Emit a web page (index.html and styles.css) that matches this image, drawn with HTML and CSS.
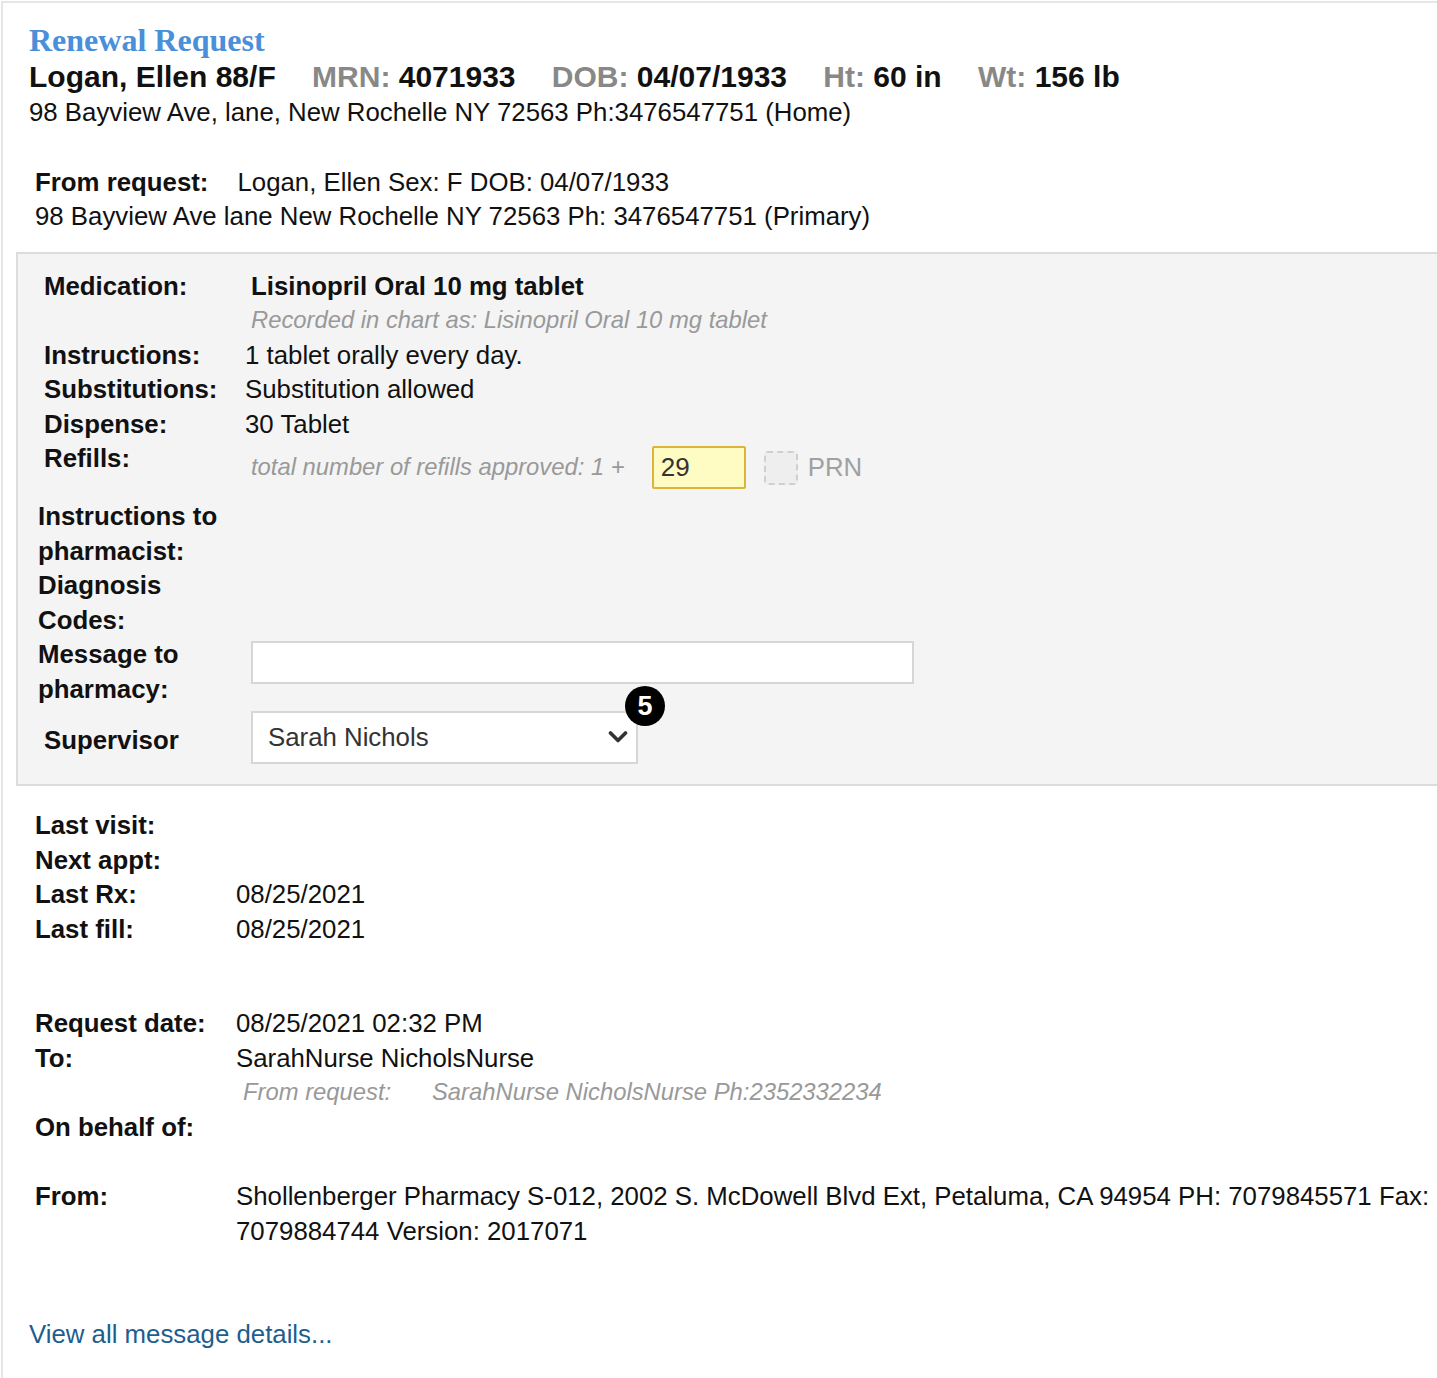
FILE: index.html
```html
<!DOCTYPE html>
<html>
<head>
<meta charset="utf-8">
<link rel="stylesheet" href="styles.css">
</head>
<body>
<div class="frame">
  <div class="header">
    <div class="title">Renewal Request</div>
    <div class="patient">
      <span class="name">Logan, Ellen 88/F</span>
      <span class="fact"><span class="k">MRN:</span> 4071933</span>
      <span class="fact"><span class="k">DOB:</span> 04/07/1933</span>
      <span class="fact"><span class="k">Ht:</span> 60 in</span>
      <span class="fact"><span class="k">Wt:</span> 156 lb</span>
    </div>
    <div class="addr">98 Bayview Ave, lane, New Rochelle NY 72563 Ph:3476547751 (Home)</div>
  </div>

  <div class="fromreq">
    <div><b class="fr-label">From request:</b>Logan, Ellen Sex: F DOB: 04/07/1933</div>
    <div>98 Bayview Ave lane New Rochelle NY 72563 Ph: 3476547751 (Primary)</div>
  </div>

  <div class="panel">
    <div class="row">
      <div class="lbl">Medication:</div>
      <div class="val">
        <div class="med">Lisinopril Oral 10 mg tablet</div>
        <div class="note">Recorded in chart as: Lisinopril Oral 10 mg tablet</div>
      </div>
    </div>
    <div class="row">
      <div class="lbl">Instructions:</div>
      <div class="val shift">1 tablet orally every day.</div>
    </div>
    <div class="row">
      <div class="lbl">Substitutions:</div>
      <div class="val shift">Substitution allowed</div>
    </div>
    <div class="row">
      <div class="lbl">Dispense:</div>
      <div class="val shift">30 Tablet</div>
    </div>
    <div class="row">
      <div class="lbl">Refills:</div>
      <div class="val refills">
        <span class="note">total number of refills approved: 1 +</span>
        <span class="refill-input">29</span>
        <span class="check"></span>
        <span class="prn">PRN</span>
      </div>
    </div>
    <div class="row">
      <div class="lbl wide">Instructions to<br>pharmacist:</div>
      <div class="val"></div>
    </div>
    <div class="row">
      <div class="lbl wide">Diagnosis<br>Codes:</div>
      <div class="val"></div>
    </div>
    <div class="row">
      <div class="lbl wide">Message to<br>pharmacy:</div>
      <div class="val"><div class="textbox"></div></div>
    </div>
    <div class="row super">
      <div class="lbl">Supervisor</div>
      <div class="val">
        <div class="select">
          <span>Sarah Nichols</span>
          <svg class="chev" width="20" height="14" viewBox="0 0 20 14"><path d="M2.5 3 L10 10.5 L17.5 3" fill="none" stroke="#333" stroke-width="3.6" stroke-linecap="round" stroke-linejoin="round"/></svg>
          <span class="badge">5</span>
        </div>
      </div>
    </div>
  </div>

  <div class="info">
    <div class="row2"><b>Last visit:</b><span></span></div>
    <div class="row2"><b>Next appt:</b><span></span></div>
    <div class="row2"><b>Last Rx:</b><span>08/25/2021</span></div>
    <div class="row2"><b>Last fill:</b><span>08/25/2021</span></div>
  </div>

  <div class="info req">
    <div class="row2"><b>Request date:</b><span>08/25/2021 02:32 PM</span></div>
    <div class="row2"><b>To:</b><span>SarahNurse NicholsNurse</span></div>
    <div class="row2"><span></span><span class="note tonote"><span class="tn-k">From request:</span>SarahNurse NicholsNurse Ph:2352332234</span></div>
    <div class="row2"><b>On behalf of:</b><span></span></div>
    <div class="row2 from"><b>From:</b><span>Shollenberger Pharmacy S-012, 2002 S. McDowell Blvd Ext, Petaluma, CA 94954 PH: 7079845571 Fax: 7079884744 Version: 2017071</span></div>
  </div>

  <a class="more" href="#">View all message details...</a>
</div>
</body>
</html>
```

FILE: styles.css
```css
html, body {
  margin: 0;
  padding: 0;
  background: #fff;
  overflow-x: hidden;
}
body {
  font-family: "Liberation Sans", Arial, sans-serif;
  font-size: 25.8px;
  line-height: 34.5px;
  color: #111;
}
.frame {
  margin-top: 1px;
  margin-left: 1px;
  border-top: 2px solid #e6e6e6;
  border-left: 2px solid #e6e6e6;
  min-height: 1370px;
  padding-top: 19px;
}
.header {
  padding-left: 26px;
}
.title {
  font-family: "Liberation Serif", "Times New Roman", serif;
  font-weight: bold;
  font-size: 32px;
  line-height: 37px;
  color: #4a8fda;
}
.patient {
  font-weight: bold;
  font-size: 30px;
  line-height: 36px;
  white-space: nowrap;
}
.patient .fact {
  margin-left: 28px;
}
.patient .k {
  color: #888;
}
.fromreq {
  margin-top: 35px;
  padding-left: 32px;
}
.fr-label {
  margin-right: 29px;
}
.panel {
  margin-top: 18px;
  margin-left: 13px;
  margin-right: -20px;
  background: #f4f4f4;
  border: 2px solid #dcdcdc;
  padding: 15px 0 20px 26px;
}
.row {
  display: grid;
  grid-template-columns: 207px 1fr;
}
.lbl {
  font-weight: bold;
}
.lbl.wide {
  margin-left: -6px;
}
.med {
  font-weight: bold;
}
.note {
  font-style: italic;
  font-size: 23.8px;
  color: #999;
}
.val.shift {
  margin-left: -6px;
}
.refills {
  display: flex;
  align-items: center;
  height: 43px;
  margin-top: 5px;
  margin-bottom: 10px;
}
.refill-input {
  box-sizing: border-box;
  width: 94px;
  height: 43px;
  margin-left: 27px;
  background: #fefcc3;
  border: 2px solid #dcb43c;
  border-radius: 2px;
  padding-left: 7px;
  font-size: 26px;
  line-height: 39px;
  color: #333;
}
.check {
  box-sizing: border-box;
  width: 34px;
  height: 34px;
  margin-left: 18px;
  border: 2px dashed #cfcfcf;
  border-radius: 3px;
  background: #eeeeee;
}
.prn {
  margin-left: 10px;
  color: #a0a0a0;
}
.textbox {
  box-sizing: border-box;
  margin-top: 4px;
  width: 663px;
  height: 43px;
  background: #fff;
  border: 2px solid #d6d6d6;
}
.row.super {
  align-items: center;
  margin-top: 5px;
}
.row.super .lbl {
  padding-top: 6px;
}
.select {
  position: relative;
  box-sizing: border-box;
  width: 387px;
  height: 53px;
  background: #fff;
  border: 2px solid #d6d6d6;
  display: flex;
  align-items: center;
  padding-left: 15px;
  color: #333;
}
.chev {
  position: absolute;
  right: 8px;
  top: 17px;
}
.badge {
  position: absolute;
  right: -29px;
  top: -27px;
  width: 40px;
  height: 40px;
  border-radius: 50%;
  background: #000;
  color: #fff;
  font-weight: bold;
  font-size: 27px;
  line-height: 40px;
  text-align: center;
}
.info {
  margin-top: 22px;
  padding-left: 32px;
}
.info.req {
  margin-top: 60px;
}
.row2 {
  display: grid;
  grid-template-columns: 201px 1fr;
}
.tonote {
  margin-left: 7px;
}
.tn-k {
  display: inline-block;
  width: 189px;
}
.row2.from {
  margin-top: 35px;
}
.more {
  display: inline-block;
  margin-top: 69px;
  margin-left: 26px;
  color: #1d5e8e;
  text-decoration: none;
}
```
